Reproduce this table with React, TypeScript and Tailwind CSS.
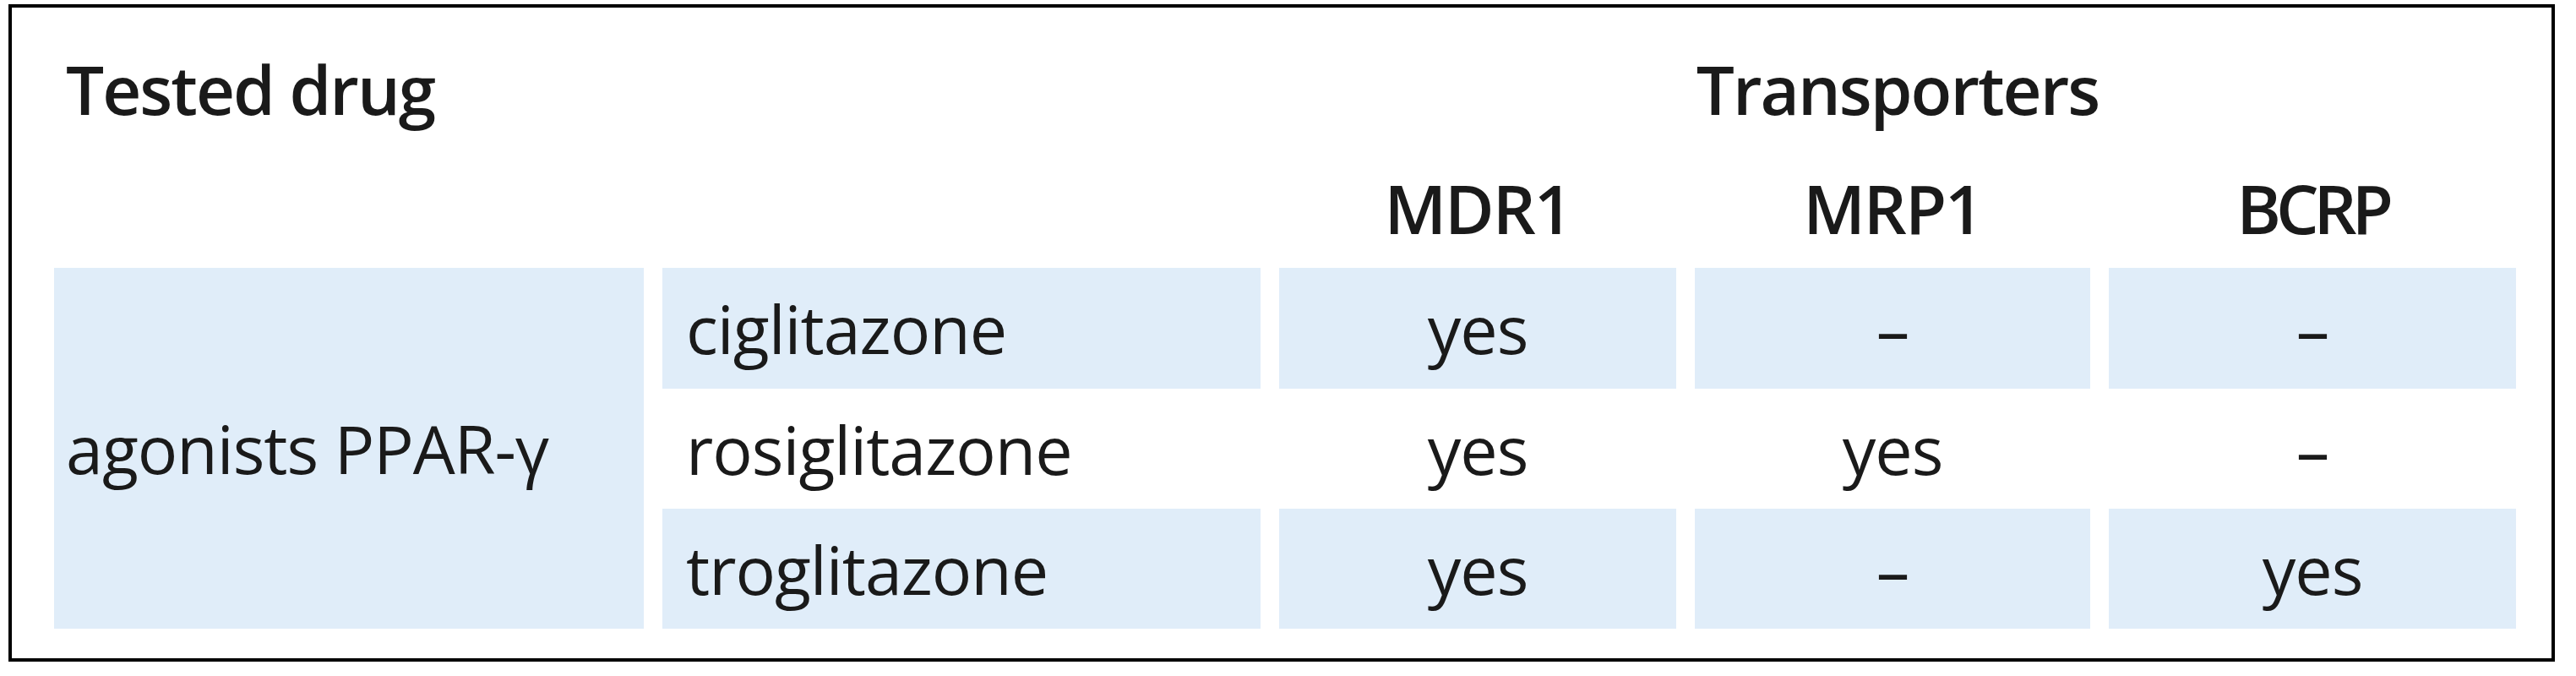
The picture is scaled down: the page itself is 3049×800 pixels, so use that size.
import React from 'react';

type Row = { drug: string; mdr1: string; mrp1: string; bcrp: string; shaded: boolean; rowCls: string };

const rows: Row[] = [
  { drug: 'ciglitazone', mdr1: 'yes', mrp1: '–', bcrp: '–', shaded: true, rowCls: 'row-start-3' },
  { drug: 'rosiglitazone', mdr1: 'yes', mrp1: 'yes', bcrp: '–', shaded: false, rowCls: 'row-start-4' },
  { drug: 'troglitazone', mdr1: 'yes', mrp1: '–', bcrp: 'yes', shaded: true, rowCls: 'row-start-5' },
];

const font = { fontFamily: '"Open Sans", "Noto Sans", sans-serif' };

const body = 'text-[79px] leading-[79px] tracking-[-1px]';
const head = 'text-[80px] leading-[80px] font-semibold';

const App: React.FC = () => {
  return (
    <div className="w-[3049px] h-[800px] bg-white text-[#1a1a1a] overflow-hidden" style={font}>
      <div className="ml-[10px] mt-[5px] w-[3014px] h-[778px] border-[4px] border-black pl-[50px] pr-[40px]">
        <div className="grid grid-cols-[698px_708px_470px_468px_482px] grid-rows-[192px_116px_143px_142px_142px] gap-x-[22px]">
          {/* header line 1 */}
          <div className={`col-start-1 row-start-1 flex items-center pl-[14px] ${head} tracking-[-2px]`}>Tested drug</div>
          <div className={`col-start-3 col-span-3 row-start-1 flex items-center justify-center ${head} tracking-[-2px]`}>
            Transporters
          </div>

          {/* header line 2 */}
          <div className={`col-start-3 row-start-2 flex justify-center pt-[5px] ${head} tracking-[-2px]`}>MDR1</div>
          <div className={`col-start-4 row-start-2 flex justify-center pt-[5px] ${head} tracking-[-2px]`}>MRP1</div>
          <div className={`col-start-5 row-start-2 flex justify-center pt-[5px] ${head} tracking-[-6px]`}>BCRP</div>

          {/* drug class, spans all body rows */}
          <div className={`col-start-1 row-start-3 row-span-3 bg-[#e0edf9] flex items-center pl-[14px] ${body}`}>
            agonists PPAR-γ
          </div>

          {rows.map((r) => {
            const bg = r.shaded ? 'bg-[#e0edf9]' : 'bg-white';
            return (
              <React.Fragment key={r.drug}>
                <div className={`col-start-2 ${r.rowCls} ${bg} flex items-center pl-[28px] ${body}`}>{r.drug}</div>
                <div className={`col-start-3 ${r.rowCls} ${bg} flex items-center justify-center ${body}`}>{r.mdr1}</div>
                <div className={`col-start-4 ${r.rowCls} ${bg} flex items-center justify-center ${body}`}>{r.mrp1}</div>
                <div className={`col-start-5 ${r.rowCls} ${bg} flex items-center justify-center ${body}`}>{r.bcrp}</div>
              </React.Fragment>
            );
          })}
        </div>
      </div>
    </div>
  );
};

export default App;
